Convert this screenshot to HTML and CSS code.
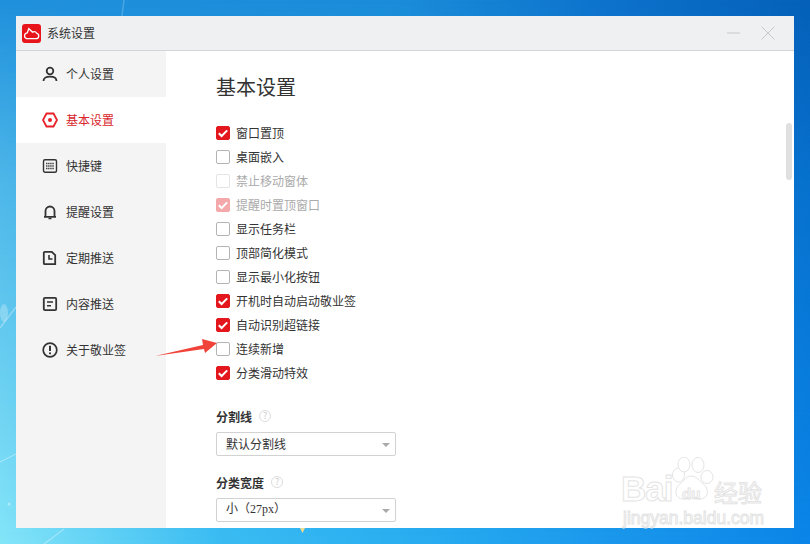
FILE: index.html
```html
<!DOCTYPE html>
<html lang="zh-CN">
<head>
<meta charset="utf-8">
<title>系统设置</title>
<link rel="stylesheet" href="styles.css">
</head>
<body>
<svg class="wallpaper" viewBox="0 0 810 544">
  <g stroke="#fff" fill="none">
    <path d="M0 328 L16 307" stroke-opacity=".3" stroke-width="1.500"/>
    <path d="M0 462 L16 454" stroke-opacity=".4"/>
    <path d="M44 544 L64 529" stroke-opacity=".3" stroke-width="1.500"/>
    <path d="M122 16 L124 0" stroke-opacity=".2" stroke-width="1.500"/>
  </g>
  <ellipse cx="4" cy="313" rx="4" ry="9" fill="#fff" fill-opacity=".25"/>
  <circle cx="9" cy="504" r="1.500" fill="#fff" fill-opacity=".4"/>
  <path d="M300 528h5l-2.500 5z" fill="#f3dc8a"/>
</svg>
<div class="window">
  <header class="titlebar">
    <svg class="logo" viewBox="0 0 19 19"><rect width="19" height="19" rx="3" fill="#e8141c"/><path d="M4.500 14.600h9.500a2.700 2.700 0 0 0 .8-5.300 3.200 3.200 0 0 0-4.300-1.200L6.800 4.700 5.300 8.800A3 3 0 0 0 4.500 14.600z" fill="none" stroke="#fff" stroke-width="1.300"/></svg>
    <span class="title">系统设置</span>
    <svg class="win-min" viewBox="0 0 14 14"><path d="M0 7h13" stroke="#c8c8c8" stroke-width="1"/></svg>
    <svg class="win-close" viewBox="0 0 14 14"><path d="M.5.5l13 13M13.500 .5l-13 13" stroke="#c8c8c8" stroke-width="1"/></svg>
  </header>
  <div class="body">
    <nav class="sidebar">
      <a class="nav-item"><svg class="nav-icon" viewBox="0 0 16 16"><circle cx="8" cy="5" r="3.300" fill="none" stroke="#333" stroke-width="1.800"/><path d="M1.500 15c0-3 2.500-4.300 6.500-4.300s6.500 1.300 6.500 4.300" fill="none" stroke="#333" stroke-width="1.800"/></svg><span class="nav-label">个人设置</span></a>
      <a class="nav-item active"><svg class="nav-icon" viewBox="0 0 16 16"><path d="M4.500 1.500h7L15 8l-3.500 6.500h-7L1 8z" fill="none" stroke="#e8222a" stroke-width="1.800"/><circle cx="8" cy="8" r="2" fill="#e8222a"/></svg><span class="nav-label">基本设置</span></a>
      <a class="nav-item"><svg class="nav-icon" viewBox="0 0 16 16"><rect x="1.500" y="1.800" width="13" height="12.400" rx="1.500" fill="none" stroke="#333" stroke-width="1.400"/><path d="M4 5.500h8M4 8h8M4 10.500h8" stroke="#444" stroke-width="1.300" stroke-dasharray="1.500 .6"/></svg><span class="nav-label">快捷键</span></a>
      <a class="nav-item"><svg class="nav-icon" viewBox="0 0 16 16"><path d="M2 12.800h12M3.500 12.500V7a4.500 4.500 0 0 1 9 0v5.500" fill="none" stroke="#333" stroke-width="1.800"/><path d="M6.500 14.500h3" stroke="#333" stroke-width="1.500"/></svg><span class="nav-label">提醒设置</span></a>
      <a class="nav-item"><svg class="nav-icon" viewBox="0 0 16 16"><path d="M2.800 1.800h7l3.400 3.400v9h-10.400a1 1 0 0 1-1-1V2.800a1 1 0 0 1 1-1z" fill="none" stroke="#333" stroke-width="1.800"/><path d="M7 5v4h3.500" fill="none" stroke="#333" stroke-width="1.600"/></svg><span class="nav-label">定期推送</span></a>
      <a class="nav-item"><svg class="nav-icon" viewBox="0 0 16 16"><rect x="1.800" y="1.800" width="12.400" height="12.400" rx="1.200" fill="none" stroke="#333" stroke-width="1.800"/><path d="M5 6h6M5 9.800h4" stroke="#333" stroke-width="1.600"/></svg><span class="nav-label">内容推送</span></a>
      <a class="nav-item"><svg class="nav-icon" viewBox="0 0 16 16"><circle cx="8" cy="8" r="6.800" fill="none" stroke="#333" stroke-width="1.700"/><path d="M8 3.800v5.200" stroke="#333" stroke-width="2"/><circle cx="8" cy="11.300" r="1.100" fill="#333"/></svg><span class="nav-label">关于敬业签</span></a>
    </nav>
    <main class="content">
      <h1 class="heading">基本设置</h1>
      <ul class="checks">
        <li class="check on"><span>窗口置顶</span></li>
        <li class="check"><span>桌面嵌入</span></li>
        <li class="check disabled"><span>禁止移动窗体</span></li>
        <li class="check on disabled"><span>提醒时置顶窗口</span></li>
        <li class="check"><span>显示任务栏</span></li>
        <li class="check"><span>顶部简化模式</span></li>
        <li class="check"><span>显示最小化按钮</span></li>
        <li class="check on"><span>开机时自动启动敬业签</span></li>
        <li class="check on"><span>自动识别超链接</span></li>
        <li class="check"><span>连续新增</span></li>
        <li class="check on"><span>分类滑动特效</span></li>
      </ul>
      <div class="field">
        <div class="label">分割线<span class="help">?</span></div>
        <div class="select">默认分割线</div>
      </div>
      <div class="field">
        <div class="label">分类宽度<span class="help">?</span></div>
        <div class="select select-serif">小（27px）</div>
      </div>
      <div class="scrollbar"></div>
    </main>
  </div>
</div>
<svg class="arrow" viewBox="0 0 64 20"><path d="M1 18 L49 7 L48 1 L63 5 L51 15 L50 11z" fill="#f0433a"/></svg>
<div class="watermark">
  <svg class="paw" viewBox="0 0 44 44"><g fill="#fff" stroke="#e4e4e4" stroke-width="1"><ellipse cx="8.500" cy="18" rx="6" ry="7"/><ellipse cx="14" cy="7.500" rx="6" ry="7.500"/><ellipse cx="28" cy="8" rx="6" ry="7.500"/><ellipse cx="37" cy="20" rx="6" ry="6.500"/><path d="M21 19c-5 0-7 5-11 8-6 4-6 15 4 15 3 0 4-1 7.500-1s5 1 8 1c10 0 9.500-11 4-15-4-3-7-8-12.500-8z"/></g></svg>
  <span class="wm-bai">Bai</span><span class="wm-du">du</span><span class="wm-jy">经验</span>
  <span class="wm-url">jingyan.baidu.com</span>
</div>
</body>
</html>
```

FILE: styles.css
```css
*, *::before, *::after { box-sizing: border-box; }
html, body { margin: 0; height: 544px; }
body {
  position: relative;
  width: 810px;
  height: 544px;
  overflow: hidden;
  padding: 16px;
  font-family: "Noto Sans CJK SC", "Noto Sans", sans-serif;
  font-size: 12px;
  color: #333;
  background: linear-gradient(to right, #1f90dc 0, #1a8cd8 50%, #0d72cc 75%, #0560b8 100%);
}
body::before {
  content: "";
  position: absolute;
  inset: 0;
  background: linear-gradient(to right, #85e5f8 0, #3abcf2 27%, #2aaef0 50%, #1a98ec 75%, #0a85e8 100%);
  -webkit-mask-image: linear-gradient(to bottom, transparent 0, rgba(0,0,0,.45) 33%, #000 100%);
  mask-image: linear-gradient(to bottom, transparent 0, rgba(0,0,0,.45) 33%, #000 100%);
}
.wallpaper { position: absolute; inset: 0; width: 810px; height: 544px; }
.window {
  position: relative;
  width: 778px;
  height: 512px;
  display: flex;
  flex-direction: column;
  background: #fff;
}
.titlebar {
  height: 35px;
  flex: none;
  display: flex;
  align-items: center;
  padding-left: 6px;
  background: #eff0f2;
  border-bottom: 1px solid #d4d5d7;
}
.logo { width: 19px; height: 19px; margin-right: 6px; }
.title { flex: 1; line-height: 16px; margin-bottom: 1px; }
.win-min { width: 14px; height: 14px; margin-right: 20px; }
.win-close { width: 14px; height: 14px; margin-right: 19px; }
.body { flex: 1; display: flex; min-height: 0; }
.sidebar { width: 150px; flex: none; background: #f4f4f4; }
.nav-item {
  height: 46px;
  display: flex;
  align-items: center;
  padding-left: 26px;
  color: #333;
}
.nav-item.active { background: #fff; color: #d8262c; }
.nav-icon { width: 16px; height: 16px; margin-right: 8px; }
.nav-label { margin-bottom: 2px; }
.content {
  position: relative;
  flex: 1;
  overflow: hidden;
  padding: 21px 0 0 50px;
}
.heading {
  margin: 0 0 19px;
  font-size: 20px;
  font-weight: 400;
  line-height: 30px;
  color: #333;
}
.checks { list-style: none; margin: 0; padding: 0; }
.check {
  height: 24px;
  display: flex;
  align-items: center;
  color: #333;
}
.check span { margin-bottom: 1px; }
.check::before {
  content: "";
  width: 14px;
  height: 14px;
  margin-right: 6px;
  border: 1px solid #b4b4b4;
  border-radius: 2px;
  background: #fff;
}
.check.on::before {
  border-color: #e4171f;
  background: #e4171f url("data:image/svg+xml,%3Csvg xmlns='http://www.w3.org/2000/svg' viewBox='0 0 14 14'%3E%3Cpath d='M2.800 7.200l2.800 2.800 5.600-5.600' fill='none' stroke='%23fff' stroke-width='2'/%3E%3C/svg%3E") center / 14px no-repeat;
}
.check.disabled { color: #aaa; }
.check.disabled::before { border-color: #e4e4e4; }
.check.on.disabled::before { border-color: #f5a8aa; background-color: #f5a8aa; }
.checks + .field { margin-top: 21px; }
.field + .field { margin-top: 16px; }
.label {
  display: flex;
  align-items: center;
  height: 20px;
  font-weight: 700;
  margin-bottom: 6px;
}
.help {
  width: 12px;
  height: 12px;
  margin-left: 7px;
  border: 1px solid #ddd;
  border-radius: 50%;
  font-size: 9px;
  font-weight: 400;
  line-height: 10px;
  text-align: center;
  color: #ccc;
}
.select {
  position: relative;
  width: 180px;
  height: 24px;
  padding-left: 9px;
  line-height: 21px;
  border: 1px solid #d2d2d2;
  border-radius: 2px;
  background: #fff;
}
.select-serif { font-family: "Liberation Serif", "Noto Sans CJK SC", serif; }
.select::after {
  content: "";
  position: absolute;
  right: 5px;
  top: 10px;
  border: 4px solid transparent;
  border-top: 4px solid #aaa;
  border-bottom: 0;
}
.scrollbar {
  position: absolute;
  left: 620px;
  top: 72px;
  width: 6px;
  height: 57px;
  border-radius: 3px;
  background: #e0e0e0;
}
.arrow { position: absolute; left: 154px; top: 338px; width: 64px; height: 20px; }
.watermark {
  position: absolute;
  left: 620px;
  top: 456px;
  width: 150px;
  height: 72px;
  color: transparent;
  font-family: "Liberation Sans", sans-serif;
  -webkit-text-stroke: 1px #e4e4e4;
}
.paw { position: absolute; left: 50px; top: 1px; width: 44px; height: 44px; }
.wm-bai { position: absolute; left: 1px; top: 13px; font-size: 35px; line-height: 40px; font-weight: 700; letter-spacing: -1px; }
.wm-du { position: absolute; left: 62px; top: 29px; font-size: 15px; line-height: 18px; font-weight: 700; }
.wm-jy { position: absolute; left: 94px; top: 22px; font-size: 24px; line-height: 28px; font-family: "Noto Sans CJK SC", sans-serif; }
.wm-url { position: absolute; left: 3px; top: 52px; font-size: 17.500px; line-height: 20px; }
```
